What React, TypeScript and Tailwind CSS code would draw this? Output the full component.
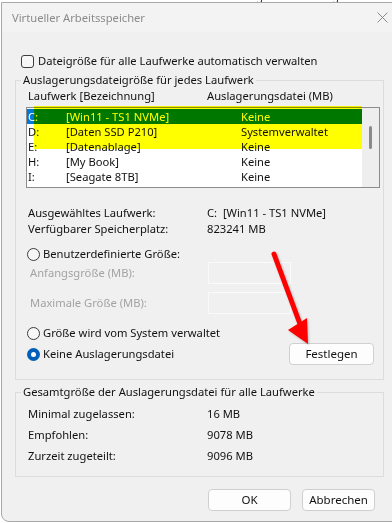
import React from 'react';

const font = { fontFamily: '"Noto Sans", "Open Sans", sans-serif' };

type Drive = { letter: string; label: string; size: string; selected?: boolean };

const drives: Drive[] = [
  { letter: 'C:', label: '[Win11 - TS1 NVMe]', size: 'Keine', selected: true },
  { letter: 'D:', label: '[Daten SSD P210]', size: 'Systemverwaltet' },
  { letter: 'E:', label: '[Datenablage]', size: 'Keine' },
  { letter: 'H:', label: '[My Book]', size: 'Keine' },
  { letter: 'I:', label: '[Seagate 8TB]', size: 'Keine' },
];

const Radio = ({ checked }: { checked?: boolean }) =>
  checked ? (
    <span className="flex h-[13px] w-[13px] items-center justify-center rounded-full bg-[#005fb8]">
      <span className="h-[5px] w-[5px] rounded-full bg-white" />
    </span>
  ) : (
    <span className="h-[13px] w-[13px] rounded-full border border-[#3c3c3c] bg-[#f7f7f7]" />
  );

const Button = ({ children, className = '' }: { children: React.ReactNode; className?: string }) => (
  <div
    className={`flex h-[22px] items-center justify-center rounded-[4px] border border-[#d0d0d0] bg-[#fdfdfd] text-[11.5px] text-[#111] ${className}`}
  >
    {children}
  </div>
);

const InfoRow = ({ label, value, h = 'h-[16px]' }: { label: string; value: string; h?: string }) => (
  <div className={`grid grid-cols-[179px_1fr] items-center pl-[12px] ${h}`}>
    <span>{label}</span>
    <span className="whitespace-pre">{value}</span>
  </div>
);

const App = () => {
  return (
    <div
      className="relative h-[523px] w-[392px] overflow-hidden bg-white text-[11.2px] leading-[14px] text-[#111]"
      style={font}
    >
      {/* window behind, only the tab labels peek out */}
      <div className="h-[2px] overflow-hidden">
        <div className="-mt-[11px] flex gap-[22px] pl-[2px] text-[11px] leading-[13px] text-[#222]">
          <span>Visuelle Effekte</span>
          <span>Erweitert</span>
          <span>Datenausführungsverhinderung</span>
        </div>
      </div>

      <div className="ml-[1px] h-[520px] w-[404px] rounded-b-[8px] border border-[#a8a8a8] bg-[#f0f0f0]">
        {/* title bar */}
        <div className="flex h-[29px] items-center justify-between bg-[#f3f3f3] pl-[10px] pr-[16px]">
          <span className="text-[11.2px] text-[#8b8b8b]">Virtueller Arbeitsspeicher</span>
          <svg width="11" height="11" viewBox="0 0 11 11">
            <path d="M0.5 0.5 L10.5 10.5 M10.5 0.5 L0.5 10.5" stroke="#8a8a8a" strokeWidth="1" />
          </svg>
        </div>

        <div className="mt-[21px] flex h-[16px] items-center gap-[4px] pl-[19px]">
          <span className="h-[13px] w-[13px] rounded-[3px] border border-[#3c3c3c] bg-[#f7f7f7]" />
          <span>Dateigröße für alle Laufwerke automatisch verwalten</span>
        </div>

        <fieldset className="ml-[13px] mt-[3px] w-[369px] border border-[#dcdcdc] pb-[14px]">
          <legend className="ml-[5px] px-[2px] leading-[16px]">Auslagerungsdateigröße für jedes Laufwerk</legend>
          <InfoRow label="Laufwerk [Bezeichnung]" value="Auslagerungsdatei (MB)" />

          <div className="relative ml-[10px] mt-[3px] flex h-[81px] w-[354px] border border-[#8c8c8c] bg-white">
            <div className="flex-1 pt-[1px]">
              {drives.map((d) => (
                <div
                  key={d.letter}
                  className={`grid h-[15px] grid-cols-[38px_175px_1fr] items-center pl-[1px] leading-[15px] ${
                    d.selected ? 'bg-[#0078d7] text-white' : ''
                  }`}
                >
                  <span>{d.letter}</span>
                  <span>{d.label}</span>
                  <span>{d.size}</span>
                </div>
              ))}
            </div>
            <div className="flex w-[17px] justify-center bg-[#eeeeee] pt-[18px]">
              <div className="h-[23px] w-[3px] rounded-full bg-[#8a8a8a]" />
            </div>
            {/* highlighter marker */}
            <div className="pointer-events-none absolute left-[7px] top-[-2px] h-[43px] w-[328px] bg-[#ffff00] mix-blend-multiply" />
          </div>

          <div className="mt-[17px]">
            <InfoRow label="Ausgewähltes Laufwerk:" value="C:  [Win11 - TS1 NVMe]" />
            <InfoRow label="Verfügbarer Speicherplatz:" value="823241 MB" />
          </div>

          <div className="mt-[9px] flex h-[16px] items-center gap-[3px] pl-[11px]">
            <Radio />
            <span>Benutzerdefinierte Größe:</span>
          </div>

          <div className="flex h-[22px] items-center justify-between pl-[14px] pr-[92px] text-[#a3a3a3]">
            <span>Anfangsgröße (MB):</span>
            <div className="h-[22px] w-[83px] border border-[#fafafa] bg-[#f0f0f0]" />
          </div>
          <div className="mt-[8px] flex h-[22px] items-center justify-between pl-[14px] pr-[92px] text-[#a3a3a3]">
            <span>Maximale Größe (MB):</span>
            <div className="h-[22px] w-[83px] border border-[#fafafa] bg-[#f0f0f0]" />
          </div>

          <div className="mt-[11px] flex h-[16px] items-center gap-[3px] pl-[11px]">
            <Radio />
            <span>Größe wird vom System verwaltet</span>
          </div>

          <div className="mt-[2px] flex h-[22px] items-center justify-between pl-[11px] pr-[9px]">
            <div className="flex items-center gap-[3px]">
              <Radio checked />
              <span>Keine Auslagerungsdatei</span>
            </div>
            <Button className="w-[85px]">Festlegen</Button>
          </div>
        </fieldset>

        <fieldset className="ml-[13px] mt-[4px] w-[369px] border border-[#dcdcdc] pb-[10px]">
          <legend className="ml-[5px] px-[2px] leading-[16px]">Gesamtgröße der Auslagerungsdatei für alle Laufwerke</legend>
          <div className="mt-[3px]">
            <InfoRow h="h-[21px]" label="Minimal zugelassen:" value="16 MB" />
            <InfoRow h="h-[21px]" label="Empfohlen:" value="9078 MB" />
            <InfoRow h="h-[21px]" label="Zurzeit zugeteilt:" value="9096 MB" />
          </div>
        </fieldset>

        <div className="mt-[12px] flex w-[373px] justify-end gap-[11px]">
          <Button className="w-[83px]">OK</Button>
          <Button className="w-[73px]">Abbrechen</Button>
        </div>
      </div>

      {/* red annotation arrow */}
      <svg className="pointer-events-none absolute left-0 top-0" width="392" height="523" viewBox="0 0 392 523">
        <g style={{ filter: 'drop-shadow(1px 1px 1px rgba(0,0,0,0.25))' }}>
          <line x1="274" y1="254" x2="300" y2="324" stroke="#ff0000" strokeWidth="5" strokeLinecap="round" />
          <polygon points="288,330 307,318 308,344" fill="#ff0000" />
        </g>
      </svg>
    </div>
  );
};

export default App;
